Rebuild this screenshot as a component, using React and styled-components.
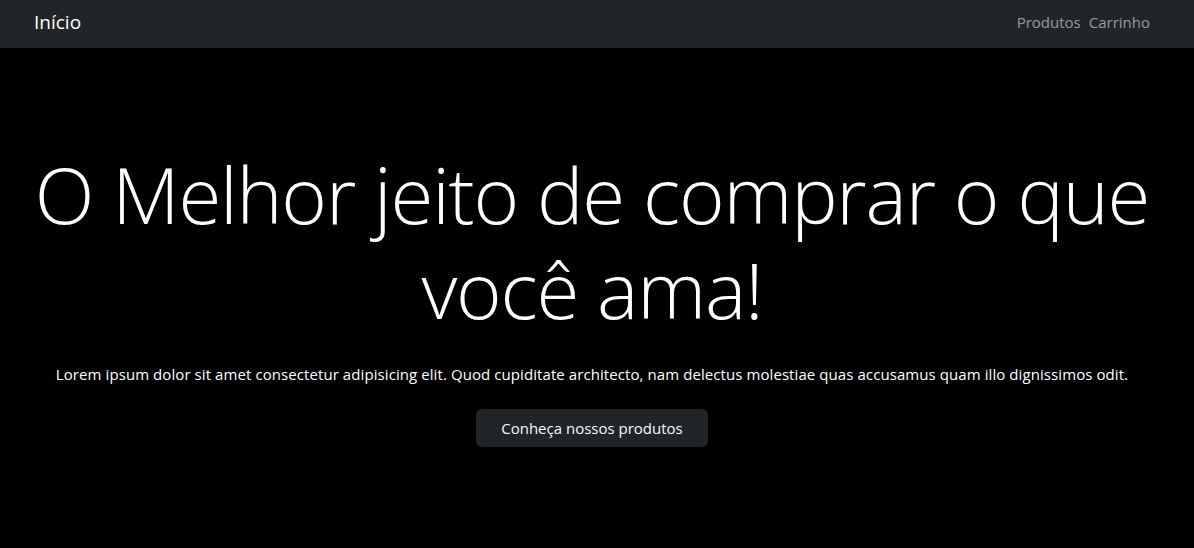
import styled, { createGlobalStyle } from 'styled-components'

const GlobalStyle = createGlobalStyle`
  body {
    margin: 0;
    background: #000;
    font-family: "Open Sans", "Noto Sans", sans-serif;
    color: #fff;
  }
`

function App() {
  return (
    <>
      <GlobalStyle />
      <Navbar>
        <Brand href="#">Início</Brand>
        <NavLinks>
          <NavLink href="#">Produtos</NavLink>
          <NavLink href="#">Carrinho</NavLink>
        </NavLinks>
      </Navbar>
      <Hero>
        <Title>O Melhor jeito de comprar o que você ama!</Title>
        <Lead>
          Lorem ipsum dolor sit amet consectetur adipisicing elit. Quod cupiditate
          architecto, nam delectus molestiae quas accusamus quam illo dignissimos odit.
        </Lead>
        <CtaButton>Conheça nossos produtos</CtaButton>
      </Hero>
    </>
  )
}

const Navbar = styled.nav`
  height: 48px;
  box-sizing: border-box;
  background-color: #212529;
  display: flex;
  align-items: center;
  justify-content: space-between;
  padding: 0 44px 4px 34px;
`

const Brand = styled.a`
  color: #fff;
  font-size: 19px;
  text-decoration: none;
`

const NavLinks = styled.div`
  display: flex;
  gap: 8px;
`

const NavLink = styled.a`
  color: rgba(255, 255, 255, 0.55);
  font-size: 15px;
  text-decoration: none;
`

const Hero = styled.main`
  display: flex;
  flex-direction: column;
  align-items: center;
  text-align: center;
  padding: 99px 30px 0 20px;
`

const Title = styled.h1`
  margin: 0 0 25px;
  font-size: 78px;
  font-weight: 300;
  line-height: 95px;
  letter-spacing: -1.2px;
  max-width: 1140px;
`

const Lead = styled.p`
  margin: 0 0 23px;
  font-size: 15px;
  line-height: 24px;
  letter-spacing: 0.08px;
`

const CtaButton = styled.button`
  width: 232px;
  height: 38px;
  border: none;
  border-radius: 6px;
  background-color: #212529;
  color: #f8f9fa;
  font-family: inherit;
  font-size: 15px;
`

export default App
